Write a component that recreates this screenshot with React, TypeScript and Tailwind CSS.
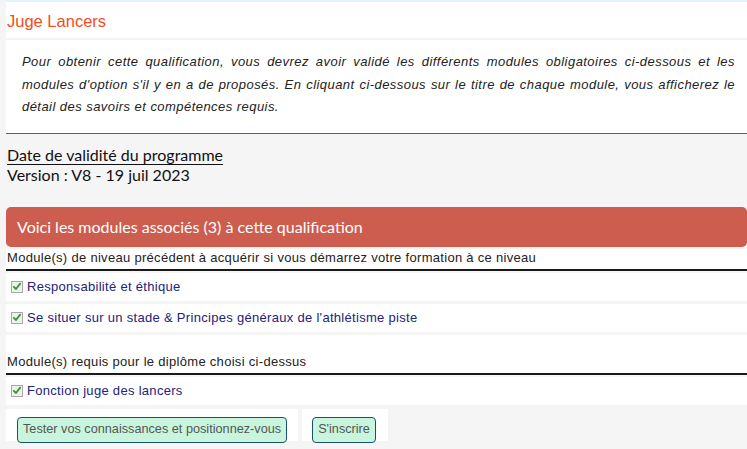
import React from 'react'

const Check = () => (
  <span className="mr-[4px] inline-flex h-[12px] w-[12px] shrink-0 items-center justify-center border border-[#a8a8a8] bg-[#f0f0f0]">
    <svg viewBox="0 0 12 12" className="h-[11px] w-[11px]">
      <path d="M2.2 6.4 L4.8 9 L9.8 2.6" fill="none" stroke="#3a9a2e" strokeWidth="2.2" strokeLinecap="round" strokeLinejoin="round" />
    </svg>
  </span>
)

const ModuleRow = ({ label }: { label: string }) => (
  <div className="flex h-[28px] items-center bg-white pl-[5px] text-[13px] tracking-[0.3px] text-[#23237a]">
    <Check />
    <span>{label}</span>
  </div>
)

const sans = "font-['Liberation_Sans',Arial,sans-serif]"
const lato = "font-['Lato','Liberation_Sans',sans-serif]"

export default function App() {
  return (
    <div className={`min-h-screen bg-[#f5f5f5] pl-[6px] ${sans}`}>
      <div className="border-t-2 border-[#e4f4fb] bg-white">
        <div className="flex h-[36px] items-center pl-[1px] pt-[3px] text-[16.5px] text-[#f04e23]">Juge Lancers</div>
        <div className="border-t-2 border-[#f3f3f3] pb-[14px] pl-[16px] pr-[12px] pt-[11px] text-justify text-[13px] italic leading-[22.5px] tracking-[0.45px] text-[#222]">
          Pour obtenir cette qualification, vous devrez avoir validé les différents modules obligatoires ci-dessous et les
          modules d'option s'il y en a de proposés. En cliquant ci-dessous sur le titre de chaque module, vous afficherez le
          détail des savoirs et compétences requis.
        </div>
      </div>
      <div className="border-t-[1.5px] border-[#009933]" />

      <div className={`pl-[1px] pt-[11px] text-[16px] leading-[20px] text-[#111] ${lato}`}>
        <div>
          <span className="underline decoration-1 underline-offset-[3px]">Date de validité du programme</span>
        </div>
        <div className="font-normal">Version : V8 - 19 juil 2023</div>
      </div>

      <div className={`mt-[22px] flex h-[40px] items-center rounded-[5px] bg-[#cd5d4e] pl-[11px] text-[16px] text-white ${lato}`}>
        Voici les modules associés (3) à cette qualification
      </div>

      <div className="mt-[2px] flex h-[22px] items-end border-b-2 border-[#1a1a1a] bg-white pb-[1px] pl-[1px] text-[13px] tracking-[0.3px] text-[#222]">
        Module(s) de niveau précédent à acquérir si vous démarrez votre formation à ce niveau
      </div>
      <div className="mt-[2px] flex flex-col gap-[3px]">
        <ModuleRow label="Responsabilité et éthique" />
        <ModuleRow label="Se situer sur un stade & Principes généraux de l'athlétisme piste" />
      </div>

      <div className="mt-[3px] flex h-[40px] items-end border-b-2 border-[#1a1a1a] bg-white pb-[1px] pl-[1px] text-[13px] tracking-[0.3px] text-[#222]">
        Module(s) requis pour le diplôme choisi ci-dessus
      </div>
      <div className="mt-[2px]">
        <ModuleRow label="Fonction juge des lancers" />
      </div>

      <div className="mt-[4px] flex gap-[4px]">
        <div className="flex h-[32px] items-start bg-white pl-[11px] pr-[11px] pt-[8px]">
          <button className="h-[26px] rounded-[4px] border border-[#1d4f73] bg-[#c8f5dd] px-[5px] text-[12.7px] text-[#555]">
            Tester vos connaissances et positionnez-vous
          </button>
        </div>
        <div className="flex h-[32px] items-start bg-white pl-[10px] pr-[12px] pt-[8px]">
          <button className="h-[26px] rounded-[4px] border border-[#1d4f73] bg-[#c8f5dd] px-[5px] text-[12.7px] text-[#555]">
            S'inscrire
          </button>
        </div>
      </div>
    </div>
  )
}
